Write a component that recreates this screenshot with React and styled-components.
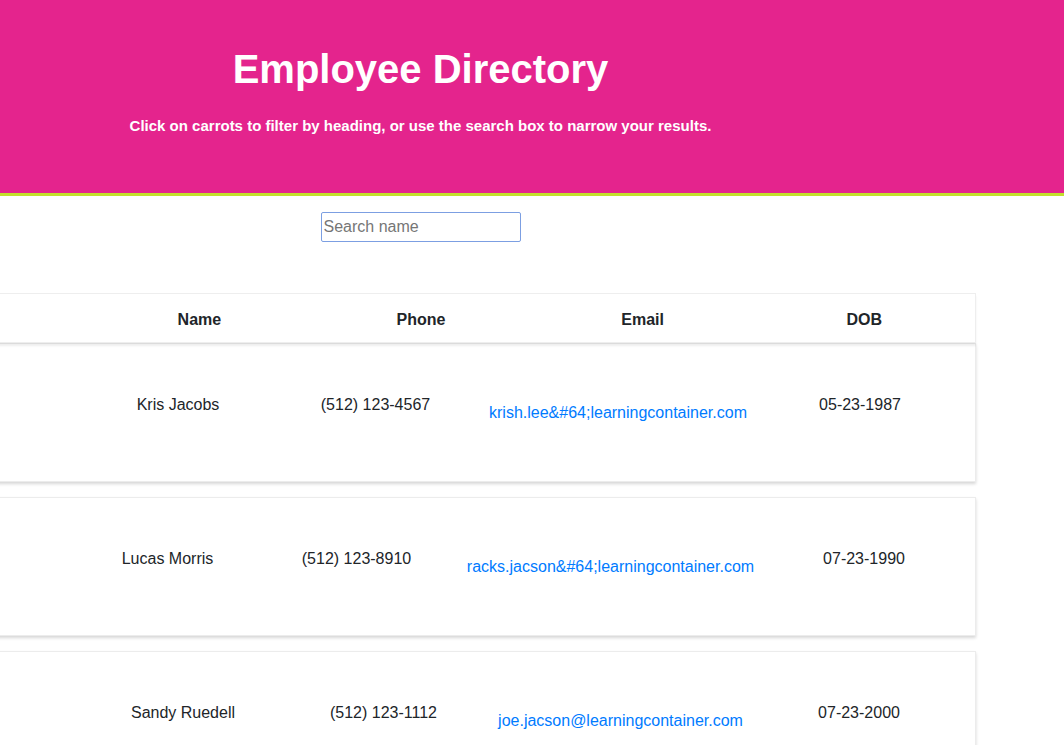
import React, { useState } from "react";
import styled, { createGlobalStyle } from "styled-components";

const GlobalStyle = createGlobalStyle`
  body {
    margin: 0;
    background: #ffffff;
    font-family: "Liberation Sans", Arial, sans-serif;
    color: #212529;
    overflow: hidden;
  }
`;

const Page = styled.div`
  width: 1064px;
  min-height: 745px;
`;

const Banner = styled.header`
  background-color: #e4248d;
  border-bottom: 3px solid #c2e02c;
  height: 193px;
`;

const BannerInner = styled.div`
  width: 841px;
  display: flex;
  flex-direction: column;
  align-items: center;
  padding-top: 46px;
`;

const Title = styled.h1`
  margin: 0;
  font-size: 40px;
  line-height: 46px;
  font-weight: bold;
  color: #ffffff;
`;

const Subtitle = styled.p`
  margin: 25px 0 0;
  font-size: 15px;
  line-height: 17px;
  font-weight: bold;
  color: #ffffff;
`;

const SearchRow = styled.div`
  width: 841px;
  display: flex;
  justify-content: center;
  padding-top: 16px;
`;

const SearchInput = styled.input`
  width: 200px;
  height: 30px;
  box-sizing: border-box;
  border: 1px solid #7c9fe2;
  border-radius: 2px;
  padding: 0 2px;
  font-family: "Liberation Sans", Arial, sans-serif;
  font-size: 16px;
  color: #212529;
  outline: none;
  caret-color: #000;
  &::placeholder {
    color: #767676;
  }
`;

const Table = styled.div`
  margin: 51px 0 0 -134px;
  width: 1110px;
  display: flex;
  flex-direction: column;
`;

const HeadCard = styled.div`
  position: relative;
  z-index: 1;
  height: 50px;
  box-sizing: border-box;
  background: #fff;
  border: 1px solid #eeeeee;
  box-shadow: 0 3px 2px rgba(0, 0, 0, 0.07);
  display: grid;
  grid-template-columns: repeat(5, 1fr);
  align-items: start;
  padding-top: 17px;
`;

const HeadCell = styled.div`
  text-align: center;
  font-size: 16px;
  line-height: 18px;
  font-weight: bold;
  color: #212529;
`;

const RowCard = styled.div`
  height: 139px;
  box-sizing: border-box;
  margin-bottom: 15px;
  background: #fff;
  border: 1px solid #ececec;
  box-shadow: 0 2px 3px rgba(0, 0, 0, 0.16);
  display: grid;
  grid-template-columns: ${(p) => p.$cols};
  align-items: start;
  padding-top: 52px;
`;

const Cell = styled.div`
  justify-self: center;
  white-space: nowrap;
  font-size: 16px;
  line-height: 18px;
  color: #212529;
  margin-top: ${(p) => (p.$low ? "8px" : "0")};
`;

const EmailLink = styled.a`
  color: #007bff;
  text-decoration: none;
`;

const CARD_LEFT = -134;

// turn the cell centres (page x) into contiguous grid tracks
const tracksFor = (centers, firstEdge) => {
  const widths = [firstEdge - CARD_LEFT];
  let edge = firstEdge;
  centers.forEach((c) => {
    const w = 2 * (c - edge);
    widths.push(w);
    edge += w;
  });
  return widths.map((w) => `${w}px`).join(" ") + " 1fr";
};

const employees = [
  {
    name: "Kris Jacobs",
    phone: "(512) 123-4567",
    email: "krish.lee&#64;learningcontainer.com",
    dob: "05-23-1987",
    centers: [177, 374.5, 617, 859],
    edge: 60,
  },
  {
    name: "Lucas Morris",
    phone: "(512) 123-8910",
    email: "racks.jacson&#64;learningcontainer.com",
    dob: "07-23-1990",
    centers: [166.5, 355.5, 609.5, 863],
    edge: 56,
  },
  {
    name: "Sandy Ruedell",
    phone: "(512) 123-1112",
    email: "joe.jacson@learningcontainer.com",
    dob: "07-23-2000",
    centers: [182, 382.5, 619.5, 858],
    edge: 66,
  },
];

export default function App() {
  const [query, setQuery] = useState("");

  return (
    <Page>
      <GlobalStyle />
      <Banner>
        <BannerInner>
          <Title>Employee Directory</Title>
          <Subtitle>
            Click on carrots to filter by heading, or use the search box to narrow your results.
          </Subtitle>
        </BannerInner>
      </Banner>

      <SearchRow>
        <SearchInput
          autoFocus
          placeholder="Search name"
          value={query}
          onChange={(e) => setQuery(e.target.value)}
        />
      </SearchRow>

      <Table>
        <HeadCard>
          <HeadCell />
          <HeadCell>Name</HeadCell>
          <HeadCell>Phone</HeadCell>
          <HeadCell>Email</HeadCell>
          <HeadCell>DOB</HeadCell>
        </HeadCard>
        {employees
          .filter((e) => e.name.toLowerCase().includes(query.toLowerCase()))
          .map((e) => (
            <RowCard key={e.name} $cols={tracksFor(e.centers, e.edge)}>
              <Cell />
              <Cell>{e.name}</Cell>
              <Cell>{e.phone}</Cell>
              <Cell $low>
                <EmailLink href="#">{e.email}</EmailLink>
              </Cell>
              <Cell>{e.dob}</Cell>
            </RowCard>
          ))}
      </Table>
    </Page>
  );
}
